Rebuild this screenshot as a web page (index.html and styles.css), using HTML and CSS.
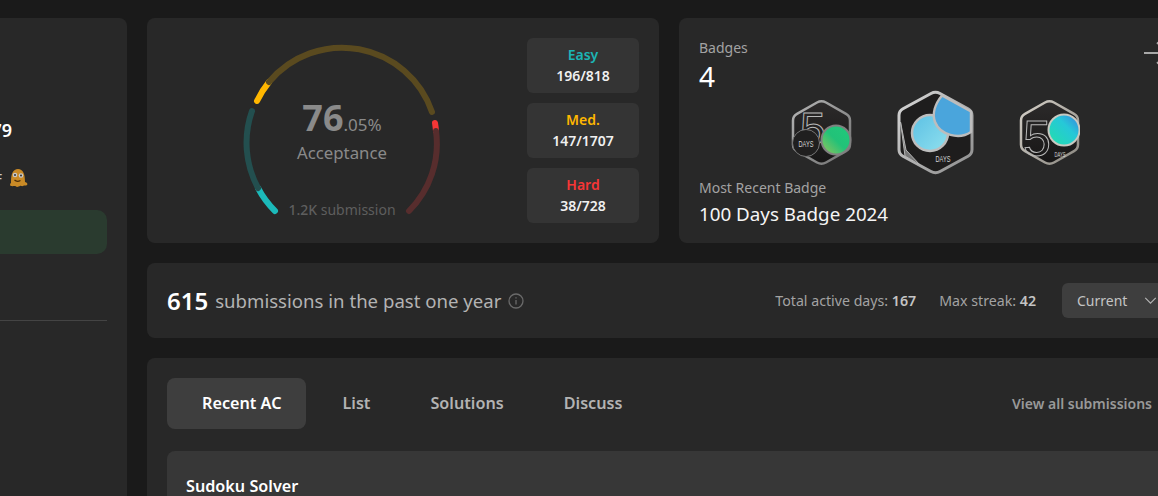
FILE: index.html
```html
<!DOCTYPE html>
<html lang="en">
<head>
  <meta charset="UTF-8" />
  <meta name="viewport" content="width=device-width, initial-scale=1" />
  <title>Profile</title>
  <link rel="stylesheet" href="styles.css">
</head>
<body>
  <div class="page">
    <aside class="sidebar">
      <div class="rank">1,379</div>
      <div class="status">
        <span class="status-text">OFF</span>
        <svg class="blob" viewBox="0 0 20 20" width="20" height="20">
          <path d="M3 14C3 6 5 1 10 1s7 5 7 13c2 .5 3 2 2 3-1 1-3 0-4 1-1 .5-2-.5-3 0s-3 1.500-4 .5-3 0-5-.5c-1.500-.5-1-2.500 0-3z" fill="#c98a26"/>
          <circle cx="7" cy="7" r="2.300" fill="#c9c9c9"/>
          <circle cx="13" cy="7.500" r="2.300" fill="#c9c9c9"/>
          <circle cx="7" cy="7" r="1" fill="#333"/>
          <circle cx="13" cy="7.500" r="1" fill="#333"/>
          <path d="M6.500 12c1.500 1.500 4 1.500 6 .5" stroke="#4a2c08" stroke-width="1.200" fill="none"/>
        </svg>
      </div>
      <div class="green-btn"></div>
      <div class="divider"></div>
    </aside>

    <main class="main">
      <div class="top-row">
        <section class="card accept-card">
          <div class="gauge">
            <svg viewBox="0 0 200 200" width="200" height="200" fill="none" stroke-width="6" stroke-linecap="round">
              <path d="M33 168A95 95 0 0 1 16 145" stroke="#1cbaba"/>
              <path d="M16 145A95 95 0 0 1 10 68" stroke="#234f4f"/>
              <path d="M15 58A95 95 0 0 1 27 39" stroke="#ffb700"/>
              <path d="M27 39A95 95 0 0 1 190 69" stroke="#5a4a1f"/>
              <path d="M193 80A95 95 0 0 1 194 88" stroke="#f63636"/>
              <path d="M194 88A95 95 0 0 1 167 168" stroke="#572d2d"/>
            </svg>
            <div class="gauge-text">
              <div class="gauge-num"><b>76</b>.05%</div>
              <div class="gauge-label">Acceptance</div>
            </div>
            <div class="gauge-sub"><b>1.2K</b> submission</div>
          </div>
          <div class="stats">
            <div class="stat"><span class="easy">Easy</span><strong>196/818</strong></div>
            <div class="stat"><span class="med">Med.</span><strong>147/1707</strong></div>
            <div class="stat"><span class="hard">Hard</span><strong>38/728</strong></div>
          </div>
        </section>

        <section class="card badge-card">
          <div class="badge-head">
            <div>
              <div class="muted">Badges</div>
              <div class="badge-count">4</div>
            </div>
            <svg class="arrow" viewBox="0 0 28 24" width="28" height="24" fill="none" stroke="#a8a8a8" stroke-width="2">
              <path d="M1 12H26M14 1.500L25 12 14 22.500"/>
            </svg>
          </div>
          <div class="badge-row">
            <svg viewBox="0 0 61 67" width="61" height="67">
              <defs>
                <linearGradient id="g1" x1="0" y1="1" x2="1" y2="0"><stop offset="0" stop-color="#9ac45a"/><stop offset=".5" stop-color="#22c278"/><stop offset="1" stop-color="#20c97c"/></linearGradient>
                <linearGradient id="s1" x1="0" y1="0" x2="1" y2="1"><stop offset="0" stop-color="#b5b5b5"/><stop offset="1" stop-color="#707070"/></linearGradient>
                <linearGradient id="f1" x1="0" y1="0" x2="0" y2="1"><stop offset="0" stop-color="#2c2a2a"/><stop offset="1" stop-color="#171616"/></linearGradient>
              </defs>
              <path d="M26 3.500Q30.500 1 35 3.500L55 14.800Q59 17 59 21.500V45.500Q59 50 55 52.200L35 63.500Q30.500 66 26 63.500L6 52.200Q2 50 2 45.500V21.500Q2 17 6 14.800Z" fill="url(#f1)" stroke="url(#s1)" stroke-width="2.500"/>
              <text x="9" y="46" class="b-five" font-size="46">5</text>
              <circle cx="15" cy="44" r="13.500" fill="#201f1f" stroke="#777" stroke-width="1"/>
              <text x="15" y="47.500" class="b-days" font-size="9" textLength="15" lengthAdjust="spacingAndGlyphs">DAYS</text>
              <circle cx="45" cy="41" r="14.500" fill="url(#g1)" stroke="#808080" stroke-width="2"/>
            </svg>
            <svg viewBox="0 0 77 85" width="77" height="85">
              <defs>
                <linearGradient id="g2" x1="0" y1="0" x2="1" y2="1"><stop offset="0" stop-color="#5cc0e4"/><stop offset="1" stop-color="#8fe0ee"/></linearGradient>
                <linearGradient id="s2" x1="0" y1="0" x2="1" y2="1"><stop offset="0" stop-color="#d8d8d8"/><stop offset="1" stop-color="#8c8c8c"/></linearGradient>
              </defs>
              <path d="M34 3.500Q38.500 1 43 3.500L71 18.800Q75 21 75 25.500V59.500Q75 64 71 66.200L43 81.500Q38.500 84 34 81.500L6 66.200Q2 64 2 59.500V25.500Q2 21 6 18.800Z" fill="#1e1d1d" stroke="url(#s2)" stroke-width="3"/>
              <path d="M3.500 32L9 60 23 75 8 66Z" fill="#777" stroke="#b5b5b5" stroke-width="1"/>
              <circle cx="33" cy="43" r="18" fill="url(#g2)" stroke="#bdbdbd" stroke-width="2.500"/>
              <path d="M45 5.500C38 14 35 24 38 32 43 45 62 50 74 42V21.500Z" fill="#4aa5dc" stroke="#bdbdbd" stroke-width="2.500" stroke-linejoin="round"/>
              <text x="46" y="72" class="b-days" font-size="9" textLength="15" lengthAdjust="spacingAndGlyphs">DAYS</text>
            </svg>
            <svg viewBox="0 0 61 67" width="61" height="67">
              <defs>
                <linearGradient id="g3" x1="0" y1="1" x2="1" y2="0"><stop offset="0" stop-color="#22dfa8"/><stop offset=".6" stop-color="#26c8d8"/><stop offset="1" stop-color="#3a7fe0"/></linearGradient>
                <linearGradient id="s3" x1="0" y1="0" x2="1" y2="1"><stop offset="0" stop-color="#d5d0c8"/><stop offset="1" stop-color="#8a8780"/></linearGradient>
                <linearGradient id="f3" x1="0" y1="0" x2="0" y2="1"><stop offset="0" stop-color="#2c2a2a"/><stop offset="1" stop-color="#171616"/></linearGradient>
              </defs>
              <path d="M26 3.500Q30.500 1 35 3.500L55 14.800Q59 17 59 21.500V45.500Q59 50 55 52.200L35 63.500Q30.500 66 26 63.500L6 52.200Q2 50 2 45.500V21.500Q2 17 6 14.800Z" fill="url(#f3)" stroke="url(#s3)" stroke-width="2.500"/>
              <text x="4" y="57" class="b-five" font-size="50">5</text>
              <circle cx="45" cy="31" r="15.500" fill="url(#g3)" stroke="#c8c8c0" stroke-width="2"/>
              <text x="41" y="58" class="b-days" font-size="6.500" textLength="11" lengthAdjust="spacingAndGlyphs">DAYS</text>
            </svg>
          </div>
          <div class="muted">Most Recent Badge</div>
          <div class="recent-name">100 Days Badge 2024</div>
        </section>
      </div>

      <section class="card year-card">
        <div class="year-title">
          <strong>615</strong>
          <span>submissions in the past one year</span>
          <svg viewBox="0 0 16 16" width="16" height="16" fill="none" stroke="#6a6a6a" stroke-width="1.300">
            <circle cx="8" cy="8" r="7"/>
            <path d="M8 7V11.500M8 4.200V5.500"/>
          </svg>
        </div>
        <div class="year-info">
          <span>Total active days: <b>167</b></span>
          <span>Max streak: <b>42</b></span>
          <div class="select">
            <span>Current</span>
            <svg viewBox="0 0 14 8" width="13" height="7" fill="none" stroke="#b5b5b5" stroke-width="1.300"><path d="M1 1L7 7 13 1"/></svg>
          </div>
        </div>
      </section>

      <section class="card list-card">
        <div class="tab-bar">
          <div class="tabs">
            <div class="tab active">Recent AC</div>
            <div class="tab">List</div>
            <div class="tab">Solutions</div>
            <div class="tab">Discuss</div>
          </div>
          <div class="view-all">View all submissions</div>
        </div>
        <div class="item">Sudoku Solver</div>
      </section>
    </main>
  </div>
</body>
</html>
```

FILE: styles.css
```css
html, body {
  height: 100%;
}
body {
  margin: 0;
  background: #1a1a1a;
  font-family: "Noto Sans", "Open Sans", sans-serif;
  overflow: hidden;
}
.page {
  display: flex;
  gap: 20px;
  width: 1364px;
  margin-left: -173px;
  padding-top: 18px;
}
.card {
  background: #282828;
  border-radius: 8px;
}

/* sidebar */
.sidebar {
  width: 300px;
  height: 478px;
  flex-shrink: 0;
  box-sizing: border-box;
  padding: 99px 20px 0 20px;
  background: #282828;
  border-radius: 8px 8px 0 0;
}
.rank {
  padding-right: 95px;
  text-align: right;
  color: #fff;
  font-size: 18px;
  font-weight: 600;
  line-height: 26px;
}
.status {
  display: flex;
  justify-content: flex-end;
  align-items: center;
  gap: 6px;
  height: 20px;
  margin-top: 25px;
  padding-right: 79px;
  color: #c9c9c9;
  font-size: 14px;
}
.green-btn {
  height: 44px;
  margin-top: 22px;
  background: #2a3b2f;
  border-radius: 10px;
}
.divider {
  height: 1px;
  margin-top: 66px;
  background: #444;
}

/* right side */
.main {
  width: 1044px;
  height: 478px;
  overflow: hidden;
  flex-shrink: 0;
}
.top-row {
  display: flex;
  gap: 20px;
}
.accept-card {
  display: flex;
  width: 512px;
  height: 225px;
  box-sizing: border-box;
  padding: 20px 20px 0 95px;
}
.gauge {
  position: relative;
  width: 200px;
  height: 200px;
  margin-top: 5px;
}
.gauge svg {
  display: block;
}
.gauge-text {
  position: absolute;
  top: 53px;
  left: 0;
  right: 0;
  text-align: center;
  color: #8a8a8a;
}
.gauge-num {
  font-size: 17px;
  line-height: 44px;
}
.gauge-num b {
  font-size: 36px;
  font-weight: 700;
}
.gauge-label {
  margin-top: -5px;
  font-size: 16.800px;
  line-height: 22px;
}
.gauge-sub {
  position: absolute;
  top: 157px;
  left: 0;
  right: 0;
  text-align: center;
  color: #5e5e5e;
  font-size: 14px;
  line-height: 20px;
}
.gauge-sub b {
  font-weight: 500;
}
.stats {
  display: flex;
  flex-direction: column;
  gap: 10px;
  margin-left: auto;
}
.stat {
  display: flex;
  flex-direction: column;
  align-items: center;
  justify-content: center;
  width: 112px;
  height: 55px;
  box-sizing: border-box;
  padding-bottom: 2px;
  background: #343434;
  border-radius: 6px;
  font-size: 14px;
  line-height: 21px;
  font-weight: 600;
}
.stat strong {
  color: #f0f0f0;
  font-weight: 600;
}
.easy { color: #1cb5b5; }
.med { color: #ffb700; }
.hard { color: #f63636; }

.badge-card {
  width: 512px;
  height: 225px;
  box-sizing: border-box;
  padding: 20px 20px 0 20px;
}
.badge-head {
  display: flex;
  justify-content: space-between;
  height: 52px;
}
.muted {
  color: #a3a3a3;
  font-size: 14px;
  line-height: 20px;
}
.badge-count {
  margin-top: 2px;
  color: #fff;
  font-size: 28px;
  line-height: 32px;
}
.arrow {
  margin-top: 3px;
}
.badge-row {
  display: flex;
  justify-content: center;
  align-items: center;
  gap: 45px;
  height: 85px;
  margin-bottom: 3px;
}
.b-five {
  font-family: "Liberation Sans", sans-serif;
  fill: none;
  stroke: #b8b8b8;
  stroke-width: 1;
}
.b-days {
  font-family: "Liberation Sans", sans-serif;
  fill: #d5d5d5;
  text-anchor: middle;
}
.recent-name {
  margin-top: 3px;
  color: #f5f5f5;
  font-size: 18.800px;
  line-height: 26px;
}

.year-card {
  display: flex;
  justify-content: space-between;
  align-items: center;
  height: 75px;
  box-sizing: border-box;
  margin-top: 20px;
  padding: 0 20px;
}
.year-title {
  display: flex;
  align-items: center;
  gap: 7px;
  color: #b3b3b3;
  font-size: 18.600px;
}
.year-title strong {
  color: #fff;
  font-size: 24px;
  font-weight: 600;
}
.year-info {
  display: flex;
  align-items: center;
  gap: 23px;
  color: #a3a3a3;
  font-size: 14.200px;
}
.year-info b {
  color: #c4c4c4;
  font-weight: 600;
}
.select {
  display: flex;
  justify-content: space-between;
  align-items: center;
  width: 109px;
  height: 35px;
  box-sizing: border-box;
  margin-left: 3px;
  padding: 0 14px 0 15px;
  background: #3e3e3e;
  border-radius: 6px;
  color: #c4c4c4;
  font-size: 14px;
}

.list-card {
  margin-top: 20px;
  height: 300px;
  padding: 20px;
  box-sizing: border-box;
}
.tab-bar {
  display: flex;
  justify-content: space-between;
  align-items: center;
}
.tabs {
  display: flex;
  gap: 12px;
}
.tab {
  padding: 0 24px;
  color: #b3b3b3;
  font-size: 16.200px;
  font-weight: 600;
  line-height: 51px;
  border-radius: 8px;
}
.tab.active {
  padding-left: 35px;
  padding-right: 25px;
  background: #3e3e3e;
  color: #fff;
}
.view-all {
  padding-right: 19px;
  color: #999;
  font-size: 14px;
  font-weight: 600;
}
.item {
  height: 100px;
  box-sizing: border-box;
  margin-top: 22px;
  padding: 24px 19px;
  background: #373737;
  border-radius: 8px;
  color: #fff;
  font-size: 16.200px;
  font-weight: 600;
  line-height: 22px;
}
```
